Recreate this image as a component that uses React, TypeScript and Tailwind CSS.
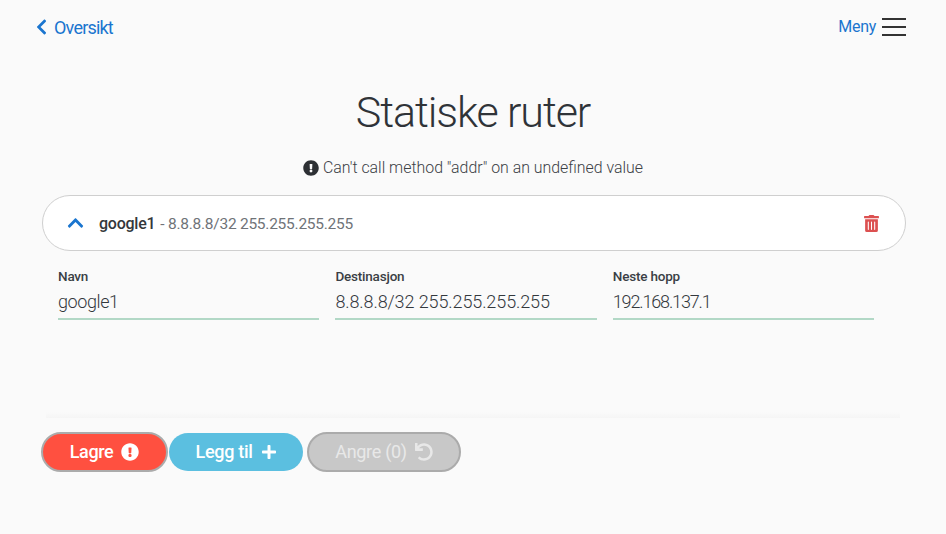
import { FaChevronLeft, FaChevronUp, FaExclamationCircle, FaPlus, FaTrashAlt, FaUndo } from "react-icons/fa";

function Field({ label, value, valueClass }: { label: string; value: string; valueClass: string }) {
  return (
    <div className="w-[261.2px]">
      <div className="text-[13.5px] leading-[16px] font-medium tracking-[-0.2px] text-[#3a3f45]">{label}</div>
      <div className={`mt-[8px] h-[28px] border-b-2 border-[#b2d8c6] text-[18px] leading-[20px] font-light text-[#33383d] ${valueClass}`}>
        {value}
      </div>
    </div>
  );
}

export default function App() {
  return (
    <div className="h-[534px] w-[946px] overflow-hidden bg-[#fafafa] font-['Roboto',sans-serif]">
      <header className="flex h-[54px] items-center justify-between pl-[36px] pr-[40px]">
        <a className="flex items-center gap-[7px] text-[18px] tracking-[-0.8px] text-[#1a75cf]">
          <FaChevronLeft className="h-[18px] w-[11px]" />
          <span>Oversikt</span>
        </a>
        <div className="flex items-center gap-[6px] text-[16px] tracking-[-0.3px] text-[#1a75cf]">
          <span>Meny</span>
          <div className="flex w-[24px] flex-col gap-[6px]">
            <div className="h-[2px] bg-[#333]" />
            <div className="h-[2px] bg-[#333]" />
            <div className="h-[2px] bg-[#333]" />
          </div>
        </div>
      </header>

      <h1 className="mt-[28px] text-center text-[43px] leading-[60px] font-light tracking-[-1.1px] text-[#2f3338]">Statiske ruter</h1>

      <div className="mt-[14px] flex items-center justify-center gap-[4px] text-[15.9px] leading-[24px] font-light text-[#3c4146]">
        <FaExclamationCircle className="h-[16px] w-[16px] text-[#2c2f33]" />
        <span>Can't call method "addr" on an undefined value</span>
      </div>

      <section className="ml-[42px] mt-[15px] w-[864px]">
        <div className="flex h-[56px] items-center justify-between rounded-[28px] border border-[#cfcfcf] bg-white pl-[23px] pr-[26px]">
          <div className="flex items-center gap-[14px]">
            <FaChevronUp className="h-[18px] w-[19px] text-[#1a75cf]" />
            <div className="pt-[2px] text-[15.5px] tracking-[-0.25px] text-[#6f7378]">
              <span className="text-[16px] font-medium text-[#33373b]">google1</span>
              <span className="ml-[5px]">- 8.8.8.8/32 255.255.255.255</span>
            </div>
          </div>
          <FaTrashAlt className="h-[17px] w-[15px] text-[#dc5050]" />
        </div>

        <div className="mt-[17px] flex gap-[16.2px] pl-[16px]">
          <Field label="Navn" value="google1" valueClass="tracking-[-0.4px]" />
          <Field label="Destinasjon" value="8.8.8.8/32 255.255.255.255" valueClass="tracking-[-0.1px]" />
          <Field label="Neste hopp" value="192.168.137.1" valueClass="tracking-[-1.15px]" />
        </div>
      </section>

      <div className="ml-[46px] mt-[92px] h-[6px] w-[854px] bg-gradient-to-t from-[#f5f5f5] to-[#fafafa]" />

      <div className="mt-[14px] flex items-center pl-[41px]">
        <button className="flex h-[40px] w-[127px] items-center justify-center gap-[8px] rounded-[20px] border-2 border-[#ababab] bg-[#ff5040] text-[18px] font-medium tracking-[-0.4px] text-white">
          <span className="pb-[2px]">Lagre</span>
          <FaExclamationCircle className="h-[18px] w-[18px]" />
        </button>
        <button className="ml-[1px] flex h-[38px] w-[134px] items-center justify-center gap-[8px] rounded-[19px] bg-[#5bbfe0] text-[18px] font-medium tracking-[-0.3px] text-white">
          <span className="pb-[2px]">Legg til</span>
          <FaPlus className="h-[16px] w-[16px]" />
        </button>
        <button className="ml-[4px] flex h-[40px] w-[154px] items-center justify-center gap-[8px] rounded-[20px] border-2 border-[#ababab] bg-[#c8c8c8] text-[18px] tracking-[-0.3px] text-[#e8e8e8]">
          <span className="pb-[2px]">Angre (0)</span>
          <FaUndo className="h-[18px] w-[18px]" />
        </button>
      </div>
    </div>
  );
}
